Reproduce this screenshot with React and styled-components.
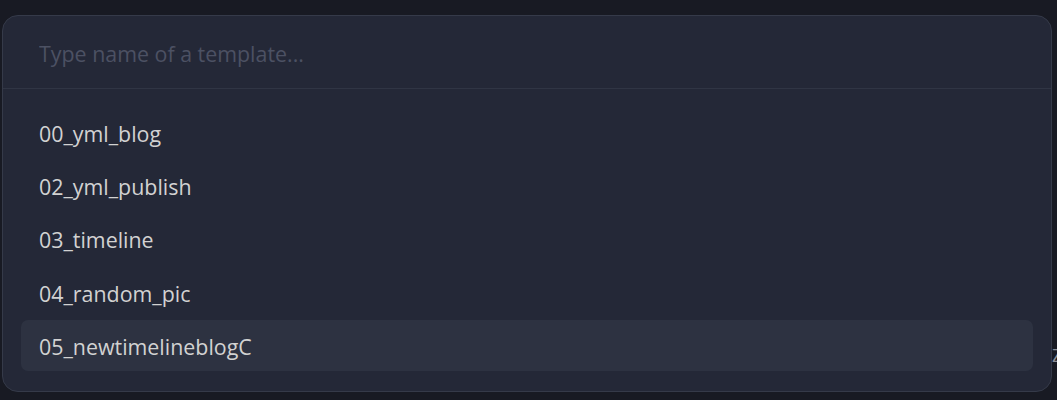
import styled, { createGlobalStyle } from "styled-components";

const GlobalStyle = createGlobalStyle`
  html, body {
    margin: 0;
    padding: 0;
    background: #181a23;
    font-family: "Open Sans", "Noto Sans", sans-serif;
    overflow: hidden;
  }
  * {
    box-sizing: border-box;
  }
`;

const templates = [
  "00_yml_blog",
  "02_yml_publish",
  "03_timeline",
  "04_random_pic",
  "05_newtimelineblogC",
];

const Page = () => {
  return (
    <>
      <GlobalStyle />
      <Backdrop>
        <BehindText>Z</BehindText>
        <Modal>
          <SearchInput placeholder="Type name of a template..." />
          <List>
            {templates.map((name, i) => (
              <Item key={name} selected={i === templates.length - 1}>
                {name}
              </Item>
            ))}
          </List>
        </Modal>
      </Backdrop>
    </>
  );
};

const Backdrop = styled.div`
  position: relative;
  width: 1057px;
  height: 400px;
  padding: 15px 0 0 2px;
`;

const BehindText = styled.div`
  position: absolute;
  left: 1052px;
  top: 343px;
  font-size: 18px;
  color: #8a8d96;
`;

const Modal = styled.div`
  position: relative;
  width: 1050px;
  height: 377px;
  background: #242837;
  border: 1px solid #353a49;
  border-radius: 16px;
  display: flex;
  flex-direction: column;
  overflow: hidden;
`;

const SearchInput = styled.input`
  height: 73px;
  flex: none;
  padding: 2px 0 0 36px;
  background: transparent;
  border: none;
  border-bottom: 1px solid #303544;
  outline: none;
  font-family: inherit;
  font-size: 21.4px;
  color: #d4d4d4;

  &::placeholder {
    color: #4c5163;
  }
`;

const List = styled.div`
  display: flex;
  flex-direction: column;
  gap: 2.2px;
  padding: 18px 18px 0 18px;
`;

const Item = styled.div`
  height: 51px;
  flex: none;
  display: flex;
  align-items: center;
  padding: 2px 18px 0;
  border-radius: 7px;
  font-size: 21.4px;
  color: #d2d2d2;
  background: ${(p) => (p.selected ? "#2d3241" : "transparent")};
`;

export default Page;
